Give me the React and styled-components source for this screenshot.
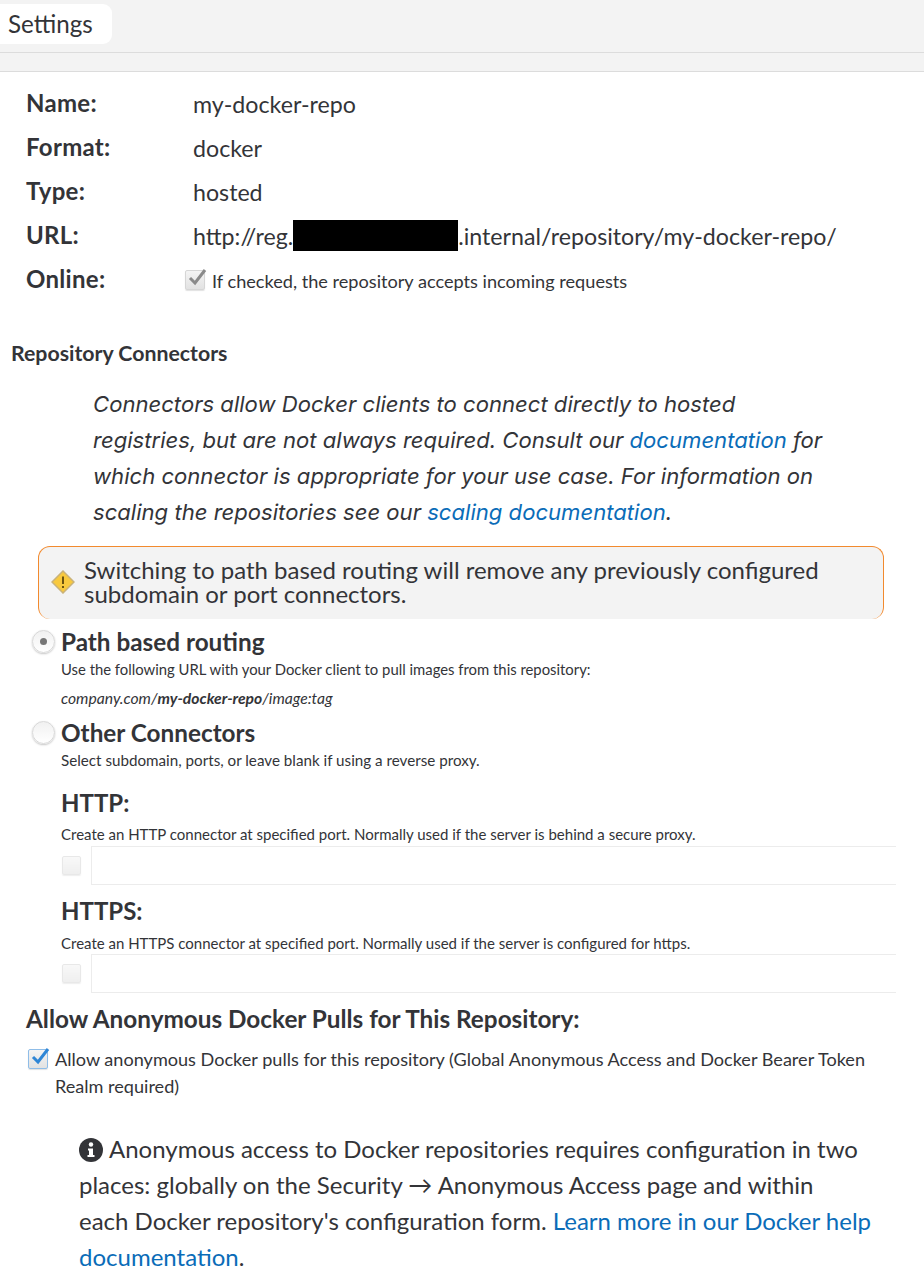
import styled, { createGlobalStyle } from 'styled-components';

const GlobalStyle = createGlobalStyle`
	html, body {
		margin: 0;
		padding: 0;
		background: #fff;
	}
	body {
		font-family: Lato, 'Open Sans', sans-serif;
		color: #333438;
	}
`;

const Page = styled.div`
	width: 924px;
	height: 1276px;
	overflow: hidden;
`;

const TabBar = styled.div`
	height: 48px;
	padding-top: 4px;
	background: #f3f3f3;
	border-bottom: 1px solid #dcdcdc;
`;

const Tab = styled.div`
	width: 104px;
	height: 40px;
	padding-left: 8px;
	background: #fff;
	border-radius: 0 9px 9px 0;
	font-size: 24.2px;
	line-height: 40px;
`;

const SubBar = styled.div`
	height: 18px;
	background: #f3f3f3;
	border-bottom: 1px solid #dcdcdc;
`;

const Summary = styled.dl`
	margin: 0;
	padding: 10px 0 0 26px;
`;

const SummaryRow = styled.div`
	display: grid;
	grid-template-columns: 167px 1fr;
	height: 44px;
	align-items: center;
`;

const Label = styled.dt`
	font-size: 24px;
	font-weight: 700;
	letter-spacing: 0.3px;
	transform: translateY(-2px);
`;

const Value = styled.dd`
	margin: 0;
	font-size: 23.2px;
	white-space: nowrap;
`;

const Redacted = styled.span`
	display: inline-block;
	width: 165px;
	height: 31px;
	margin: -6px 0;
	background: #000;
`;

const OnlineValue = styled.dd`
	display: flex;
	align-items: center;
	gap: 7px;
	margin: 0 0 0 -8px;
	font-size: 18.15px;
`;

const OnlineText = styled.span`
	padding-top: 2px;
`;

const Box = styled.span`
	display: inline-flex;
	flex: none;
	align-items: center;
	justify-content: center;
	width: ${(p) => p.$size || 19}px;
	height: ${(p) => p.$size || 19}px;
	box-sizing: border-box;
	border: 1px solid ${(p) => (p.$blue ? '#8fbde8' : '#d6d6d6')};
	border-radius: 2px;
	background: linear-gradient(#f4f4f4, #e2e2e2);
	box-shadow: 0 1px 1px rgba(0, 0, 0, 0.12);
	opacity: ${(p) => (p.$faint ? 0.55 : 1)};
`;

const Tick = styled.svg`
	width: 20px;
	height: 20px;
	margin: -4px -3px 0 0;
	flex: none;
`;

const SectionTitle = styled.h3`
	margin: 39px 0 0 11px;
	font-size: 21.3px;
	font-weight: 700;
	line-height: 24px;
`;

const Lead = styled.p`
	margin: ${(p) => p.$top}px ${(p) => p.$right}px 0 ${(p) => p.$indent}px;
	font-size: 24px;
	line-height: 36px;
	${(p) => p.$italic && 'font-family: Inter, sans-serif; font-style: italic; font-size: 22.1px;'}
`;

const DocLink = styled.a`
	color: #0a6cb8;
	text-decoration: none;
`;

const Warning = styled.div`
	display: flex;
	align-items: center;
	gap: 9px;
	box-sizing: border-box;
	width: 846px;
	height: 73px;
	margin: 16px 0 0 38px;
	padding: 0 20px 2px 12px;
	background: #f3f3f3;
	border: 1px solid #f28a2e;
	border-bottom: none;
	border-radius: 12px;
	font-size: 24px;
	line-height: 24px;
`;

const RadioRow = styled.div`
	display: flex;
	align-items: center;
	gap: 6px;
	margin: ${(p) => p.$top}px 0 0 32px;
	height: 28px;
`;

const Radio = styled.span`
	display: flex;
	flex: none;
	align-items: center;
	justify-content: center;
	width: 23px;
	height: 23px;
	box-sizing: border-box;
	border: 1px solid #d8d8d8;
	border-radius: 50%;
	background: linear-gradient(#f1f1f1, #ffffff);
	box-shadow: 0 1px 2px rgba(0, 0, 0, 0.22);
	&::after {
		content: '';
		display: ${(p) => (p.$on ? 'block' : 'none')};
		width: 7px;
		height: 7px;
		border-radius: 50%;
		background: #777;
	}
`;

const RadioLabel = styled.span`
	font-size: 24.3px;
	font-weight: 700;
`;

const Help = styled.div`
	margin: ${(p) => p.$top || 0}px 0 0 61px;
	font-size: ${(p) => p.$size || 15}px;
	line-height: 20px;
	white-space: nowrap;
	${(p) => p.$italic && 'font-style: italic;'}
`;

const ConnectorTitle = styled.h4`
	margin: ${(p) => p.$top}px 0 0 61px;
	font-size: 24px;
	font-weight: 700;
	line-height: 28px;
`;

const PortRow = styled.div`
	display: flex;
	align-items: center;
	gap: 10px;
	width: 834px;
	margin: ${(p) => p.$top}px 0 0 62px;
`;

const PortInput = styled.div`
	flex: 1;
	height: 39px;
	box-sizing: border-box;
	border: 1px solid #ececec;
	border-right: none;
`;

const AnonTitle = styled.h3`
	margin: 11px 0 0 26px;
	font-size: 24.3px;
	font-weight: 700;
	line-height: 30px;
`;

const AnonRow = styled.div`
	display: flex;
	align-items: flex-start;
	gap: 7px;
	margin: 12px 50px 0 28px;
	font-size: 18.1px;
	line-height: 27px;
`;

const AnonBox = styled(Box)`
	margin-top: 3px;
`;

const InfoIcon = styled.svg`
	width: 24px;
	height: 24px;
	vertical-align: -4px;
	margin-right: 6px;
`;

const Check = ({ color }) => (
	<Tick viewBox="0 0 20 20">
		<path d="M3 10 L8 15 L18 2" fill="none" stroke={color} strokeWidth="3" />
	</Tick>
);

const App = () => (
	<Page>
		<GlobalStyle />
		<TabBar>
			<Tab>Settings</Tab>
		</TabBar>
		<SubBar />
		<Summary>
			<SummaryRow>
				<Label>Name:</Label>
				<Value>my-docker-repo</Value>
			</SummaryRow>
			<SummaryRow>
				<Label>Format:</Label>
				<Value>docker</Value>
			</SummaryRow>
			<SummaryRow>
				<Label>Type:</Label>
				<Value>hosted</Value>
			</SummaryRow>
			<SummaryRow>
				<Label>URL:</Label>
				<Value>
					http://reg.<Redacted />.internal/repository/my-docker-repo/
				</Value>
			</SummaryRow>
			<SummaryRow>
				<Label>Online:</Label>
				<OnlineValue>
					<Box $size={20}>
						<Check color="#8a8a8a" />
					</Box>
					<OnlineText>If checked, the repository accepts incoming requests</OnlineText>
				</OnlineValue>
			</SummaryRow>
		</Summary>
		<SectionTitle>Repository Connectors</SectionTitle>
		<Lead $italic $top={21} $right={88} $indent={93}>
			Connectors allow Docker clients to connect directly to hosted
			registries, but are not always required. Consult our{' '}
			<DocLink>documentation</DocLink> for which connector is appropriate for
			your use case. For information on scaling the repositories see our{' '}
			<DocLink>scaling documentation</DocLink>.
		</Lead>
		<Warning>
			<svg width="24" height="24" viewBox="0 0 24 24" style={{ flex: 'none' }}>
				<path d="M12 1 L23 12 L12 23 L1 12 Z" fill="#f8c93e" stroke="#c9b27a" strokeWidth="1.5" />
				<path d="M12 6.5 V14 M12 16 V18" stroke="#6b5310" strokeWidth="2" />
			</svg>
			<span>
				Switching to path based routing will remove any previously configured
				subdomain or port connectors.
			</span>
		</Warning>
		<RadioRow $top={8}>
			<Radio $on />
			<RadioLabel>Path based routing</RadioLabel>
		</RadioRow>
		<Help $top={4} $size={14.85}>
			Use the following URL with your Docker client to pull images from this
			repository:
		</Help>
		<Help $italic $top={9} $size={15.7}>
			company.com/<b>my-docker-repo</b>/image:tag
		</Help>
		<RadioRow $top={10}>
			<Radio />
			<RadioLabel>Other Connectors</RadioLabel>
		</RadioRow>
		<Help $top={4} $size={15.2}>
			Select subdomain, ports, or leave blank if using a reverse proxy.
		</Help>
		<ConnectorTitle $top={19}>HTTP:</ConnectorTitle>
		<Help $top={7}>
			Create an HTTP connector at specified port. Normally used if the server
			is behind a secure proxy.
		</Help>
		<PortRow $top={2}>
			<Box $faint />
			<PortInput />
		</PortRow>
		<ConnectorTitle $top={12}>HTTPS:</ConnectorTitle>
		<Help $top={8}>
			Create an HTTPS connector at specified port. Normally used if the server
			is configured for https.
		</Help>
		<PortRow $top={1}>
			<Box $faint />
			<PortInput />
		</PortRow>
		<AnonTitle>Allow Anonymous Docker Pulls for This Repository:</AnonTitle>
		<AnonRow>
			<AnonBox $blue $size={20}>
				<Check color="#2f86d6" />
			</AnonBox>
			<span>
				Allow anonymous Docker pulls for this repository (Global Anonymous
				Access and Docker Bearer Token Realm required)
			</span>
		</AnonRow>
		<Lead $top={31} $right={49} $indent={79}>
			<InfoIcon viewBox="0 0 24 24">
				<circle cx="12" cy="12" r="12" fill="#333438" />
				<circle cx="12" cy="6.5" r="2.2" fill="#fff" />
				<path d="M9 10.5 H14 V17 H15.5 V19 H8.5 V17 H10 V12.5 H9 Z" fill="#fff" />
			</InfoIcon>
			Anonymous access to Docker repositories requires configuration in two
			places: globally on the Security → Anonymous Access page and within
			each{'\u00A0'}Docker repository's configuration form.{' '}
			<DocLink>Learn more in our Docker help documentation</DocLink>.
		</Lead>
	</Page>
);

export default App;
